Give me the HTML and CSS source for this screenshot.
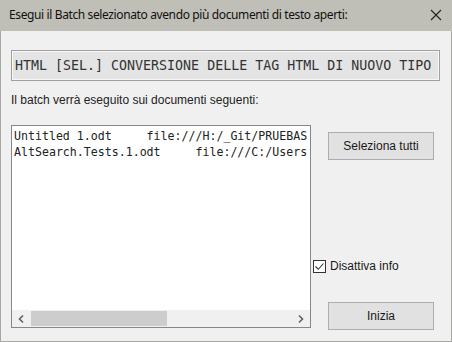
FILE: index.html
```html
<!DOCTYPE html>
<html lang="it">
<head>
    <meta charset="UTF-8">
    <title>Esegui il Batch</title>
    <link rel="stylesheet" href="styles.css">
</head>
<body>

    <div class="window">
        <div class="titlebar">
            <span class="title">Esegui il Batch selezionato avendo più documenti di testo aperti:</span>
            <svg class="close" width="12" height="12" viewBox="0 0 12 12">
                <path d="M1 1 L11 11 M11 1 L1 11" stroke="#222" stroke-width="1.1" fill="none"/>
            </svg>
        </div>

        <div class="content">
            <div class="batch-name">HTML [SEL.] CONVERSIONE DELLE TAG HTML DI NUOVO TIPO</div>

            <div class="hint">Il batch verrà eseguito sui documenti seguenti:</div>

            <div class="main">
                <div class="doc-list">
                    <div class="rows">
                        <div class="row">Untitled 1.odt     file:///H:/_Git/PRUEBAS</div>
                        <div class="row">AltSearch.Tests.1.odt     file:///C:/Users</div>
                    </div>
                    <div class="hscroll">
                        <svg class="arrow" width="8" height="10" viewBox="0 0 8 10">
                            <path d="M6 1.5 L2.5 5 L6 8.5" stroke="#606060" stroke-width="1.6" fill="none"/>
                        </svg>
                        <div class="track"><div class="thumb"></div></div>
                        <svg class="arrow" width="8" height="10" viewBox="0 0 8 10">
                            <path d="M2 1.5 L5.5 5 L2 8.5" stroke="#606060" stroke-width="1.6" fill="none"/>
                        </svg>
                    </div>
                </div>

                <div class="side">
                    <button class="btn">Seleziona tutti</button>
                    <label class="check">
                        <span class="box">
                            <svg width="11" height="11" viewBox="0 0 11 11">
                                <path d="M1.5 5.5 L4.3 8.3 L9.5 2.5" stroke="#333" stroke-width="1.1" fill="none"/>
                            </svg>
                        </span>
                        Disattiva info
                    </label>
                    <button class="btn">Inizia</button>
                </div>
            </div>
        </div>
    </div>

</body>
</html>
```

FILE: styles.css
```css
body {
    margin: 0;
    font-family: "Liberation Sans", Arial, sans-serif;
    font-size: 12px;
    color: #1a1a1a;
}

.window {
    width: 452px;
    height: 342px;
    box-sizing: border-box;
    background: #f0f0f0;
    border: 1px solid #a8a8a4;
    border-top: none;
    display: flex;
    flex-direction: column;
}

.titlebar {
    height: 31px;
    margin: 0 -1px;
    background: #bfbeb7;
    display: flex;
    align-items: center;
    padding: 0 10px 0 9px;
}

.title {
    flex: 1;
    font-family: "Noto Sans", sans-serif;
    font-size: 12px;
    letter-spacing: -0.38px;
    color: #111;
    padding-bottom: 2px;
}

.close {
    margin-bottom: 1px;
}

.content {
    padding: 19px 11px 0 10px;
}

.batch-name {
    height: 31px;
    box-sizing: border-box;
    border: 1px solid #a0a0a0;
    box-shadow: inset 0 0 0 1px #f7f7f7;
    background: #e4e4e4;
    font-family: "DejaVu Sans Mono", monospace;
    font-size: 13.3px;
    line-height: 29px;
    padding-left: 3px;
    white-space: pre;
    overflow: hidden;
    color: #333;
}

.hint {
    margin-top: 12px;
    line-height: 14px;
    color: #222;
}

.main {
    margin-top: 18px;
    display: flex;
    align-items: flex-start;
    gap: 17px;
}

.doc-list {
    width: 300px;
    height: 203px;
    box-sizing: border-box;
    border: 1px solid #828790;
    background: #fff;
    display: flex;
    flex-direction: column;
}

.rows {
    flex: 1;
    padding: 2px 0 0 2px;
    overflow: hidden;
}

.row {
    font-family: "DejaVu Sans Mono", monospace;
    font-size: 11.6px;
    line-height: 16px;
    white-space: pre;
    overflow: hidden;
    color: #222;
}

.hscroll {
    height: 17px;
    background: #f0f0f0;
    display: flex;
    align-items: center;
    padding: 0 5px;
    gap: 4px;
}

.track {
    flex: 1;
    height: 15px;
    margin: 0 2px;
}

.thumb {
    width: 136px;
    height: 100%;
    background: #cdcdcd;
}

.side {
    width: 106px;
    height: 205px;
    box-sizing: border-box;
    display: flex;
    flex-direction: column;
    align-items: flex-start;
    padding-top: 7px;
}

.btn {
    width: 106px;
    height: 28px;
    border: 1px solid #adadad;
    background: #e1e1e1;
    font-family: "Liberation Sans", Arial, sans-serif;
    font-size: 12px;
    color: #1a1a1a;
    padding: 0;
}

.check {
    margin-top: auto;
    margin-left: -15px;
    margin-bottom: 29px;
    display: flex;
    align-items: center;
    gap: 4px;
}

.box {
    width: 13px;
    height: 13px;
    box-sizing: border-box;
    border: 1px solid #333;
    background: #fff;
    display: flex;
    align-items: center;
    justify-content: center;
}
```
